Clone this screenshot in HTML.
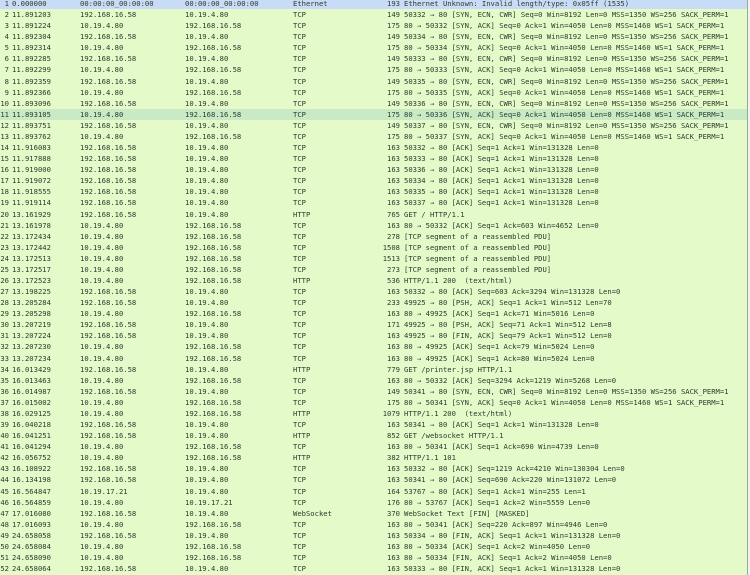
<!DOCTYPE html>
<html><head><meta charset="utf-8"><style>
html,body{margin:0;padding:0;background:#e4fbc9;}
#w{position:relative;width:750px;height:575px;overflow:hidden;background:#e4fbc9;font-family:"DejaVu Sans Mono","Liberation Mono",monospace;font-size:7.2px;color:#2e3a2e;}
.r{position:absolute;left:0;width:747px;height:11.08px;line-height:11.08px;white-space:pre;background:#e4fbc9;}
.r span{position:absolute;top:0;}
.n{right:738px;text-align:right;}
.t{left:12px}.s{left:80px}.d{left:185px}.p{left:293px}
.l{right:347px;text-align:right;}
.i{left:404px}
.b{background:#c9dcf7}
.sel{background:#c8ebc6}
#bd{position:absolute;left:747px;top:0;width:1px;height:575px;background:#9aa89a;}
#bd2{position:absolute;left:748px;top:0;width:2px;height:575px;background:#f2f2f2;}
</style></head><body><div id="w">
<div class="r b" style="top:-2px"><span class="n">1</span><span class="t">0.000000</span><span class="s">00:00:00_00:00:00</span><span class="d">00:00:00_00:00:00</span><span class="p">Ethernet</span><span class="l">193</span><span class="i">Ethernet Unknown: Invalid length/type: 0x05ff (1535)</span></div>
<div class="r" style="top:9.08px"><span class="n">2</span><span class="t">11.891203</span><span class="s">192.168.16.58</span><span class="d">10.19.4.80</span><span class="p">TCP</span><span class="l">149</span><span class="i">50332 → 80 [SYN, ECN, CWR] Seq=0 Win=8192 Len=0 MSS=1350 WS=256 SACK_PERM=1</span></div>
<div class="r" style="top:20.16px"><span class="n">3</span><span class="t">11.891224</span><span class="s">10.19.4.80</span><span class="d">192.168.16.58</span><span class="p">TCP</span><span class="l">175</span><span class="i">80 → 50332 [SYN, ACK] Seq=0 Ack=1 Win=4050 Len=0 MSS=1460 WS=1 SACK_PERM=1</span></div>
<div class="r" style="top:31.24px"><span class="n">4</span><span class="t">11.892304</span><span class="s">192.168.16.58</span><span class="d">10.19.4.80</span><span class="p">TCP</span><span class="l">149</span><span class="i">50334 → 80 [SYN, ECN, CWR] Seq=0 Win=8192 Len=0 MSS=1350 WS=256 SACK_PERM=1</span></div>
<div class="r" style="top:42.32px"><span class="n">5</span><span class="t">11.892314</span><span class="s">10.19.4.80</span><span class="d">192.168.16.58</span><span class="p">TCP</span><span class="l">175</span><span class="i">80 → 50334 [SYN, ACK] Seq=0 Ack=1 Win=4050 Len=0 MSS=1460 WS=1 SACK_PERM=1</span></div>
<div class="r" style="top:53.4px"><span class="n">6</span><span class="t">11.892285</span><span class="s">192.168.16.58</span><span class="d">10.19.4.80</span><span class="p">TCP</span><span class="l">149</span><span class="i">50333 → 80 [SYN, ECN, CWR] Seq=0 Win=8192 Len=0 MSS=1350 WS=256 SACK_PERM=1</span></div>
<div class="r" style="top:64.48px"><span class="n">7</span><span class="t">11.892299</span><span class="s">10.19.4.80</span><span class="d">192.168.16.58</span><span class="p">TCP</span><span class="l">175</span><span class="i">80 → 50333 [SYN, ACK] Seq=0 Ack=1 Win=4050 Len=0 MSS=1460 WS=1 SACK_PERM=1</span></div>
<div class="r" style="top:75.56px"><span class="n">8</span><span class="t">11.892359</span><span class="s">192.168.16.58</span><span class="d">10.19.4.80</span><span class="p">TCP</span><span class="l">149</span><span class="i">50335 → 80 [SYN, ECN, CWR] Seq=0 Win=8192 Len=0 MSS=1350 WS=256 SACK_PERM=1</span></div>
<div class="r" style="top:86.64px"><span class="n">9</span><span class="t">11.892366</span><span class="s">10.19.4.80</span><span class="d">192.168.16.58</span><span class="p">TCP</span><span class="l">175</span><span class="i">80 → 50335 [SYN, ACK] Seq=0 Ack=1 Win=4050 Len=0 MSS=1460 WS=1 SACK_PERM=1</span></div>
<div class="r" style="top:97.72px"><span class="n">10</span><span class="t">11.893096</span><span class="s">192.168.16.58</span><span class="d">10.19.4.80</span><span class="p">TCP</span><span class="l">149</span><span class="i">50336 → 80 [SYN, ECN, CWR] Seq=0 Win=8192 Len=0 MSS=1350 WS=256 SACK_PERM=1</span></div>
<div class="r sel" style="top:108.8px"><span class="n">11</span><span class="t">11.893105</span><span class="s">10.19.4.80</span><span class="d">192.168.16.58</span><span class="p">TCP</span><span class="l">175</span><span class="i">80 → 50336 [SYN, ACK] Seq=0 Ack=1 Win=4050 Len=0 MSS=1460 WS=1 SACK_PERM=1</span></div>
<div class="r" style="top:119.88px"><span class="n">12</span><span class="t">11.893751</span><span class="s">192.168.16.58</span><span class="d">10.19.4.80</span><span class="p">TCP</span><span class="l">149</span><span class="i">50337 → 80 [SYN, ECN, CWR] Seq=0 Win=8192 Len=0 MSS=1350 WS=256 SACK_PERM=1</span></div>
<div class="r" style="top:130.96px"><span class="n">13</span><span class="t">11.893762</span><span class="s">10.19.4.80</span><span class="d">192.168.16.58</span><span class="p">TCP</span><span class="l">175</span><span class="i">80 → 50337 [SYN, ACK] Seq=0 Ack=1 Win=4050 Len=0 MSS=1460 WS=1 SACK_PERM=1</span></div>
<div class="r" style="top:142.04px"><span class="n">14</span><span class="t">11.916083</span><span class="s">192.168.16.58</span><span class="d">10.19.4.80</span><span class="p">TCP</span><span class="l">163</span><span class="i">50332 → 80 [ACK] Seq=1 Ack=1 Win=131328 Len=0</span></div>
<div class="r" style="top:153.12px"><span class="n">15</span><span class="t">11.917888</span><span class="s">192.168.16.58</span><span class="d">10.19.4.80</span><span class="p">TCP</span><span class="l">163</span><span class="i">50333 → 80 [ACK] Seq=1 Ack=1 Win=131328 Len=0</span></div>
<div class="r" style="top:164.2px"><span class="n">16</span><span class="t">11.919000</span><span class="s">192.168.16.58</span><span class="d">10.19.4.80</span><span class="p">TCP</span><span class="l">163</span><span class="i">50336 → 80 [ACK] Seq=1 Ack=1 Win=131328 Len=0</span></div>
<div class="r" style="top:175.28px"><span class="n">17</span><span class="t">11.919072</span><span class="s">192.168.16.58</span><span class="d">10.19.4.80</span><span class="p">TCP</span><span class="l">163</span><span class="i">50334 → 80 [ACK] Seq=1 Ack=1 Win=131328 Len=0</span></div>
<div class="r" style="top:186.36px"><span class="n">18</span><span class="t">11.918555</span><span class="s">192.168.16.58</span><span class="d">10.19.4.80</span><span class="p">TCP</span><span class="l">163</span><span class="i">50335 → 80 [ACK] Seq=1 Ack=1 Win=131328 Len=0</span></div>
<div class="r" style="top:197.44px"><span class="n">19</span><span class="t">11.919114</span><span class="s">192.168.16.58</span><span class="d">10.19.4.80</span><span class="p">TCP</span><span class="l">163</span><span class="i">50337 → 80 [ACK] Seq=1 Ack=1 Win=131328 Len=0</span></div>
<div class="r" style="top:208.52px"><span class="n">20</span><span class="t">13.161929</span><span class="s">192.168.16.58</span><span class="d">10.19.4.80</span><span class="p">HTTP</span><span class="l">765</span><span class="i">GET / HTTP/1.1</span></div>
<div class="r" style="top:219.6px"><span class="n">21</span><span class="t">13.161978</span><span class="s">10.19.4.80</span><span class="d">192.168.16.58</span><span class="p">TCP</span><span class="l">163</span><span class="i">80 → 50332 [ACK] Seq=1 Ack=603 Win=4652 Len=0</span></div>
<div class="r" style="top:230.68px"><span class="n">22</span><span class="t">13.172434</span><span class="s">10.19.4.80</span><span class="d">192.168.16.58</span><span class="p">TCP</span><span class="l">278</span><span class="i">[TCP segment of a reassembled PDU]</span></div>
<div class="r" style="top:241.76px"><span class="n">23</span><span class="t">13.172442</span><span class="s">10.19.4.80</span><span class="d">192.168.16.58</span><span class="p">TCP</span><span class="l">1508</span><span class="i">[TCP segment of a reassembled PDU]</span></div>
<div class="r" style="top:252.84px"><span class="n">24</span><span class="t">13.172513</span><span class="s">10.19.4.80</span><span class="d">192.168.16.58</span><span class="p">TCP</span><span class="l">1513</span><span class="i">[TCP segment of a reassembled PDU]</span></div>
<div class="r" style="top:263.92px"><span class="n">25</span><span class="t">13.172517</span><span class="s">10.19.4.80</span><span class="d">192.168.16.58</span><span class="p">TCP</span><span class="l">273</span><span class="i">[TCP segment of a reassembled PDU]</span></div>
<div class="r" style="top:275px"><span class="n">26</span><span class="t">13.172523</span><span class="s">10.19.4.80</span><span class="d">192.168.16.58</span><span class="p">HTTP</span><span class="l">536</span><span class="i">HTTP/1.1 200  (text/html)</span></div>
<div class="r" style="top:286.08px"><span class="n">27</span><span class="t">13.198225</span><span class="s">192.168.16.58</span><span class="d">10.19.4.80</span><span class="p">TCP</span><span class="l">163</span><span class="i">50332 → 80 [ACK] Seq=603 Ack=3294 Win=131328 Len=0</span></div>
<div class="r" style="top:297.16px"><span class="n">28</span><span class="t">13.205284</span><span class="s">192.168.16.58</span><span class="d">10.19.4.80</span><span class="p">TCP</span><span class="l">233</span><span class="i">49925 → 80 [PSH, ACK] Seq=1 Ack=1 Win=512 Len=70</span></div>
<div class="r" style="top:308.24px"><span class="n">29</span><span class="t">13.205298</span><span class="s">10.19.4.80</span><span class="d">192.168.16.58</span><span class="p">TCP</span><span class="l">163</span><span class="i">80 → 49925 [ACK] Seq=1 Ack=71 Win=5016 Len=0</span></div>
<div class="r" style="top:319.32px"><span class="n">30</span><span class="t">13.207219</span><span class="s">192.168.16.58</span><span class="d">10.19.4.80</span><span class="p">TCP</span><span class="l">171</span><span class="i">49925 → 80 [PSH, ACK] Seq=71 Ack=1 Win=512 Len=8</span></div>
<div class="r" style="top:330.4px"><span class="n">31</span><span class="t">13.207224</span><span class="s">192.168.16.58</span><span class="d">10.19.4.80</span><span class="p">TCP</span><span class="l">163</span><span class="i">49925 → 80 [FIN, ACK] Seq=79 Ack=1 Win=512 Len=0</span></div>
<div class="r" style="top:341.48px"><span class="n">32</span><span class="t">13.207230</span><span class="s">10.19.4.80</span><span class="d">192.168.16.58</span><span class="p">TCP</span><span class="l">163</span><span class="i">80 → 49925 [ACK] Seq=1 Ack=79 Win=5024 Len=0</span></div>
<div class="r" style="top:352.56px"><span class="n">33</span><span class="t">13.207234</span><span class="s">10.19.4.80</span><span class="d">192.168.16.58</span><span class="p">TCP</span><span class="l">163</span><span class="i">80 → 49925 [ACK] Seq=1 Ack=80 Win=5024 Len=0</span></div>
<div class="r" style="top:363.64px"><span class="n">34</span><span class="t">16.013429</span><span class="s">192.168.16.58</span><span class="d">10.19.4.80</span><span class="p">HTTP</span><span class="l">779</span><span class="i">GET /printer.jsp HTTP/1.1</span></div>
<div class="r" style="top:374.72px"><span class="n">35</span><span class="t">16.013463</span><span class="s">10.19.4.80</span><span class="d">192.168.16.58</span><span class="p">TCP</span><span class="l">163</span><span class="i">80 → 50332 [ACK] Seq=3294 Ack=1219 Win=5268 Len=0</span></div>
<div class="r" style="top:385.8px"><span class="n">36</span><span class="t">16.014987</span><span class="s">192.168.16.58</span><span class="d">10.19.4.80</span><span class="p">TCP</span><span class="l">149</span><span class="i">50341 → 80 [SYN, ECN, CWR] Seq=0 Win=8192 Len=0 MSS=1350 WS=256 SACK_PERM=1</span></div>
<div class="r" style="top:396.88px"><span class="n">37</span><span class="t">16.015002</span><span class="s">10.19.4.80</span><span class="d">192.168.16.58</span><span class="p">TCP</span><span class="l">175</span><span class="i">80 → 50341 [SYN, ACK] Seq=0 Ack=1 Win=4050 Len=0 MSS=1460 WS=1 SACK_PERM=1</span></div>
<div class="r" style="top:407.96px"><span class="n">38</span><span class="t">16.029125</span><span class="s">10.19.4.80</span><span class="d">192.168.16.58</span><span class="p">HTTP</span><span class="l">1079</span><span class="i">HTTP/1.1 200  (text/html)</span></div>
<div class="r" style="top:419.04px"><span class="n">39</span><span class="t">16.040218</span><span class="s">192.168.16.58</span><span class="d">10.19.4.80</span><span class="p">TCP</span><span class="l">163</span><span class="i">50341 → 80 [ACK] Seq=1 Ack=1 Win=131328 Len=0</span></div>
<div class="r" style="top:430.12px"><span class="n">40</span><span class="t">16.041251</span><span class="s">192.168.16.58</span><span class="d">10.19.4.80</span><span class="p">HTTP</span><span class="l">852</span><span class="i">GET /websocket HTTP/1.1</span></div>
<div class="r" style="top:441.2px"><span class="n">41</span><span class="t">16.041294</span><span class="s">10.19.4.80</span><span class="d">192.168.16.58</span><span class="p">TCP</span><span class="l">163</span><span class="i">80 → 50341 [ACK] Seq=1 Ack=690 Win=4739 Len=0</span></div>
<div class="r" style="top:452.28px"><span class="n">42</span><span class="t">16.056752</span><span class="s">10.19.4.80</span><span class="d">192.168.16.58</span><span class="p">HTTP</span><span class="l">382</span><span class="i">HTTP/1.1 101</span></div>
<div class="r" style="top:463.36px"><span class="n">43</span><span class="t">16.108922</span><span class="s">192.168.16.58</span><span class="d">10.19.4.80</span><span class="p">TCP</span><span class="l">163</span><span class="i">50332 → 80 [ACK] Seq=1219 Ack=4210 Win=130304 Len=0</span></div>
<div class="r" style="top:474.44px"><span class="n">44</span><span class="t">16.134198</span><span class="s">192.168.16.58</span><span class="d">10.19.4.80</span><span class="p">TCP</span><span class="l">163</span><span class="i">50341 → 80 [ACK] Seq=690 Ack=220 Win=131072 Len=0</span></div>
<div class="r" style="top:485.52px"><span class="n">45</span><span class="t">16.564847</span><span class="s">10.19.17.21</span><span class="d">10.19.4.80</span><span class="p">TCP</span><span class="l">164</span><span class="i">53767 → 80 [ACK] Seq=1 Ack=1 Win=255 Len=1</span></div>
<div class="r" style="top:496.6px"><span class="n">46</span><span class="t">16.564859</span><span class="s">10.19.4.80</span><span class="d">10.19.17.21</span><span class="p">TCP</span><span class="l">176</span><span class="i">80 → 53767 [ACK] Seq=1 Ack=2 Win=5559 Len=0</span></div>
<div class="r" style="top:507.68px"><span class="n">47</span><span class="t">17.016080</span><span class="s">192.168.16.58</span><span class="d">10.19.4.80</span><span class="p">WebSocket</span><span class="l">370</span><span class="i">WebSocket Text [FIN] [MASKED]</span></div>
<div class="r" style="top:518.76px"><span class="n">48</span><span class="t">17.016093</span><span class="s">10.19.4.80</span><span class="d">192.168.16.58</span><span class="p">TCP</span><span class="l">163</span><span class="i">80 → 50341 [ACK] Seq=220 Ack=897 Win=4946 Len=0</span></div>
<div class="r" style="top:529.84px"><span class="n">49</span><span class="t">24.658058</span><span class="s">192.168.16.58</span><span class="d">10.19.4.80</span><span class="p">TCP</span><span class="l">163</span><span class="i">50334 → 80 [FIN, ACK] Seq=1 Ack=1 Win=131328 Len=0</span></div>
<div class="r" style="top:540.92px"><span class="n">50</span><span class="t">24.658084</span><span class="s">10.19.4.80</span><span class="d">192.168.16.58</span><span class="p">TCP</span><span class="l">163</span><span class="i">80 → 50334 [ACK] Seq=1 Ack=2 Win=4050 Len=0</span></div>
<div class="r" style="top:552px"><span class="n">51</span><span class="t">24.658090</span><span class="s">10.19.4.80</span><span class="d">192.168.16.58</span><span class="p">TCP</span><span class="l">163</span><span class="i">80 → 50334 [FIN, ACK] Seq=1 Ack=2 Win=4050 Len=0</span></div>
<div class="r" style="top:563.08px"><span class="n">52</span><span class="t">24.658064</span><span class="s">192.168.16.58</span><span class="d">10.19.4.80</span><span class="p">TCP</span><span class="l">163</span><span class="i">50333 → 80 [FIN, ACK] Seq=1 Ack=1 Win=131328 Len=0</span></div>
<div id="bd"></div><div id="bd2"></div>
</div></body></html>
